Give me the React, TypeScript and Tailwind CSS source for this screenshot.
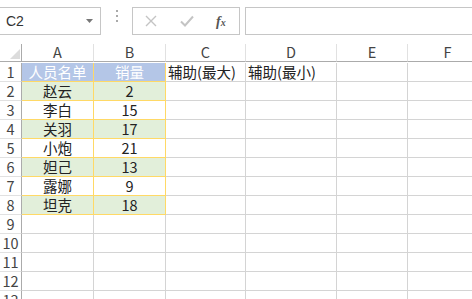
import { Fragment } from "react";

type Row = { name: string; qty: string };

const rows: Row[] = [
  { name: "赵云", qty: "2" },
  { name: "李白", qty: "15" },
  { name: "关羽", qty: "17" },
  { name: "小炮", qty: "21" },
  { name: "妲己", qty: "13" },
  { name: "露娜", qty: "9" },
  { name: "坦克", qty: "18" }
];

const cols = ["A", "B", "C", "D", "E", "F"];
const font = { fontFamily: '"Noto Sans CJK SC", "Liberation Sans", sans-serif' };

export default function App() {
  return (
    <div className="h-[299px] w-[472px] overflow-hidden bg-white text-[#222]" style={font}>
      <Toolbar />
      <div className="grid grid-cols-[22px_72px_72px_80px_91px_71px_80px] auto-rows-[19px]">
        <div className="relative h-[18px] border-r border-b border-[#ababab]">
          <svg className="absolute right-[1px] bottom-[2px]" width="10" height="10" viewBox="0 0 10 10">
            <polygon points="10,0 10,10 0,10" fill="#dcdcdc" />
          </svg>
        </div>
        {cols.map((c) => (
          <div
            key={c}
            className="flex h-[18px] items-center justify-center border-r border-b border-[#ababab] border-r-[#e1e1e1] text-[14.5px] leading-none text-[#444]"
          >
            {c}
          </div>
        ))}

        <RowHead n={1} />
        <div className="flex items-center justify-center border-r border-b border-[#ffd966] bg-[#b4c6e7] text-[14.5px] text-white">人员名单</div>
        <div className="flex items-center justify-center border-r border-b border-[#ffd966] bg-[#b4c6e7] text-[14.5px] text-white">销量</div>
        <div className="flex items-center whitespace-nowrap border-r border-b border-[#d4d4d4] pl-[2px] text-[14.5px]">辅助(最大)</div>
        <div className="flex items-center whitespace-nowrap border-r border-b border-[#d4d4d4] pl-[2px] text-[14.5px]">辅助(最小)</div>
        <Empty />
        <Empty />

        {rows.map((r, i) => {
          const green = i % 2 === 0;
          return (
            <Fragment key={r.name}>
              <RowHead n={i + 2} />
              <div className={`flex items-center justify-center border-r border-b border-[#ffd966] text-[14.5px] ${green ? "bg-[#e2efda]" : ""}`}>{r.name}</div>
              <div className={`flex items-center justify-center border-r border-b border-[#ffd966] text-[14.5px] ${green ? "bg-[#e2efda]" : ""}`}>{r.qty}</div>
              <Empty />
              <Empty />
              <Empty />
              <Empty />
            </Fragment>
          );
        })}

        {[9, 10, 11, 12, 13].map((n) => (
          <Fragment key={n}>
            <RowHead n={n} />
            <Empty />
            <Empty />
            <Empty />
            <Empty />
            <Empty />
            <Empty />
          </Fragment>
        ))}
      </div>
    </div>
  );
}

function Toolbar() {
  return (
    <div className="flex h-[44px] items-start pt-[7px]">
      <div className="flex h-[28px] w-[101px] items-center justify-between border border-l-0 border-[#c6c6c6] pl-[6px] pr-[7px]">
        <span className="text-[14px] text-[#333]" style={{ fontFamily: '"Liberation Sans", sans-serif' }}>C2</span>
        <svg width="7" height="4" viewBox="0 0 7 4">
          <polygon points="0,0 7,0 3.5,4" fill="#777" />
        </svg>
      </div>
      <div className="flex w-[31px] flex-col items-center gap-[3px] pt-[3px]">
        <span className="h-[2px] w-[2px] bg-[#aaa]" />
        <span className="h-[2px] w-[2px] bg-[#aaa]" />
        <span className="h-[2px] w-[2px] bg-[#aaa]" />
      </div>
      <div className="flex h-[28px] w-[108px] items-center border border-[#c6c6c6] pl-[12px]">
        <svg width="12" height="12" viewBox="0 0 12 12">
          <path d="M1 1 L11 11 M11 1 L1 11" stroke="#c4c4c4" strokeWidth="1.4" />
        </svg>
        <svg width="14" height="12" viewBox="0 0 14 12" className="ml-[23px]">
          <path d="M1 6.5 L5 10.5 L13 1.5" stroke="#c4c4c4" strokeWidth="2" fill="none" />
        </svg>
        <span className="ml-[22px] text-[14px] font-bold italic text-[#555]" style={{ fontFamily: '"Liberation Serif", serif' }}>
          f<span className="text-[10px]">x</span>
        </span>
      </div>
      <div className="ml-[5px] h-[28px] flex-1 border border-r-0 border-[#c6c6c6]" />
    </div>
  );
}

function RowHead({ n }: { n: number }) {
  return (
    <div className="flex items-center justify-center border-r border-b border-[#ababab] border-b-[#e1e1e1] text-[14.5px] leading-none text-[#444]">
      {n}
    </div>
  );
}

function Empty() {
  return <div className="border-r border-b border-[#d4d4d4]" />;
}
